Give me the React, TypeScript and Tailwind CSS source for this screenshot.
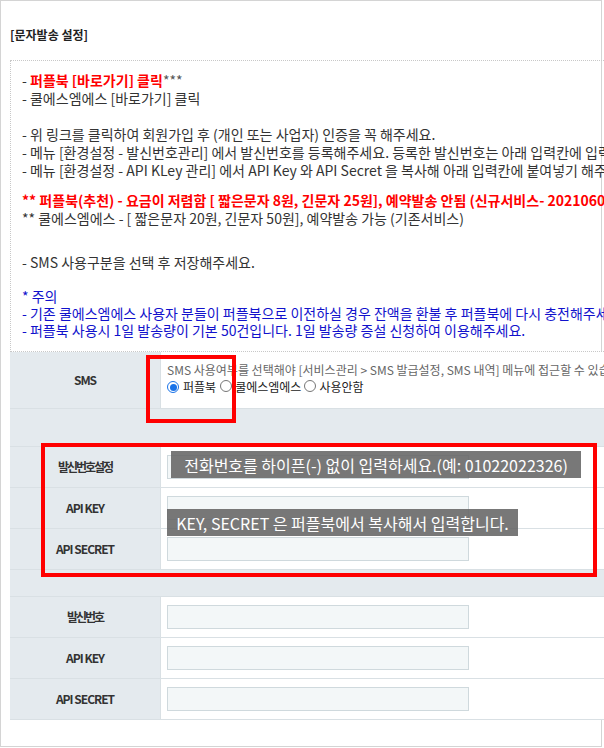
import React from 'react'

function Radio({ checked }: { checked?: boolean }) {
  return checked ? (
    <span className="inline-flex h-[12px] w-[12px] shrink-0 items-center justify-center rounded-full border-[1.5px] border-[#1a73e8] bg-white">
      <span className="h-[7px] w-[7px] rounded-full bg-[#1a73e8]" />
    </span>
  ) : (
    <span className="inline-block h-[12px] w-[12px] shrink-0 rounded-full border border-[#767676] bg-white" />
  )
}

function FieldRow({ label, ko }: { label: string; ko?: boolean }) {
  return (
    <div className="flex h-[41px] border-b border-[#d9e0e4]">
      <div
        className={`flex w-[151px] shrink-0 items-center justify-center border-r border-[#d9e0e4] bg-[#e4eaee] text-[12px] font-bold text-[#333] ${
          ko ? 'tracking-[-2px]' : 'tracking-[-1px]'
        }`}
      >
        {label}
      </div>
      <div className="flex flex-1 items-center bg-white pl-[6px]">
        <input
          type="text"
          readOnly
          className="h-[24px] w-[302px] border border-[#cfd9dd] bg-[#f3f7f8] outline-none"
        />
      </div>
    </div>
  )
}

export default function App() {
  return (
    <div className="relative h-[748px] w-[604px] overflow-hidden bg-white font-['Noto_Sans_CJK_KR',sans-serif] text-[#333]">
      <div className="h-[747px] w-[602px] border border-[#d4d4d4] pl-[9px] pt-[26px]">
        <div className="text-[12px] font-bold leading-[16px] text-[#222]">[문자발송 설정]</div>

        {/* 안내 문구 */}
        <div className="mt-[17px] w-[760px] whitespace-nowrap border border-dotted border-[#c8c8c8] pb-[12px] pl-[11px] pt-[10px] text-[14px] leading-[18px]">
          <div>
            - <span className="font-bold text-[#f00]">퍼플북 [바로가기] 클릭</span>
            <span className="text-[#555]">***</span>
          </div>
          <div>- 쿨에스엠에스 [바로가기] 클릭</div>

          <div className="mt-[18px]">- 위 링크를 클릭하여 회원가입 후 (개인 또는 사업자) 인증을 꼭 해주세요.</div>
          <div>- 메뉴 [환경설정 - 발신번호관리] 에서 발신번호를 등록해주세요. 등록한 발신번호는 아래 입력칸에 입력해주세요.</div>
          <div>- 메뉴 [환경설정 - API KLey 관리] 에서 API Key 와 API Secret 을 복사해 아래 입력칸에 붙여넣기 해주세요.</div>

          <div className="mt-[12px] font-bold text-[#f00]">
            ** 퍼플북(추천) - 요금이 저렴함 [ 짧은문자 8원, 긴문자 25원], 예약발송 안됨 (신규서비스- 20210601~)
          </div>
          <div>** 쿨에스엠에스 - [ 짧은문자 20원, 긴문자 50원], 예약발송 가능 (기존서비스)</div>

          <div className="mt-[26px]">- SMS 사용구분을 선택 후 저장해주세요.</div>

          <div className="mt-[17px] leading-[17px] text-[#1111cc]">
            <div>* 주의</div>
            <div>- 기존 쿨에스엠에스 사용자 분들이 퍼플북으로 이전하실 경우 잔액을 환불 후 퍼플북에 다시 충전해주세요.</div>
            <div>- 퍼플북 사용시 1일 발송량이 기본 50건입니다. 1일 발송량 증설 신청하여 이용해주세요.</div>
          </div>
        </div>

        {/* 설정 테이블 */}
        <div className="w-[760px]">
          <div className="flex h-[57px] border-b border-[#d9e0e4]">
            <div className="flex w-[151px] shrink-0 items-center justify-center border-r border-[#d9e0e4] bg-[#e4eaee] text-[12px] font-bold tracking-[-1px] text-[#333]">
              SMS
            </div>
            <div className="flex-1 whitespace-nowrap bg-white pl-[6px] pt-[10px]">
              <div className="text-[12px] leading-[16px] text-[#666]">
                SMS 사용여부를 선택해야 [서비스관리 &gt; SMS 발급설정, SMS 내역] 메뉴에 접근할 수 있습니다.
              </div>
              <div className="mt-[1px] flex items-center text-[12px] leading-[16px] text-[#222]">
                <Radio checked />
                <span className="ml-[4px]">퍼플북</span>
                <span className="ml-[4px]">
                  <Radio />
                </span>
                <span className="ml-[3px]">쿨에스엠에스</span>
                <span className="ml-[3px]">
                  <Radio />
                </span>
                <span className="ml-[3px]">사용안함</span>
              </div>
            </div>
          </div>

          <div className="h-[38px] border-b border-[#d9e0e4] bg-[#e4eaee]" />

          <FieldRow label="발신번호설정" ko />
          <FieldRow label="API KEY" />
          <FieldRow label="API SECRET" />

          <div className="h-[27px] border-b border-[#d9e0e4] bg-[#e4eaee]" />

          <FieldRow label="발신번호" ko />
          <FieldRow label="API KEY" />
          <FieldRow label="API SECRET" />
        </div>
      </div>

      {/* 주석 표시 */}
      <div className="pointer-events-none absolute left-[146px] top-[355px] h-[68px] w-[90px] border-4 border-[#f00]" />
      <div className="pointer-events-none absolute left-[41px] top-[443px] h-[134px] w-[556px] border-4 border-[#f00]" />

      <div className="absolute left-[171px] top-[451px] flex h-[27px] w-[410px] items-center justify-center whitespace-nowrap bg-[rgba(100,100,100,0.87)] text-[16px] text-white">
        전화번호를 하이픈(-) 없이 입력하세요.(예: 01022022326)
      </div>
      <div className="absolute left-[167px] top-[509px] flex h-[27px] w-[351px] items-center justify-center whitespace-nowrap bg-[rgba(100,100,100,0.87)] text-[16px] text-white">
        KEY, SECRET 은 퍼플북에서 복사해서 입력합니다.
      </div>
    </div>
  )
}
